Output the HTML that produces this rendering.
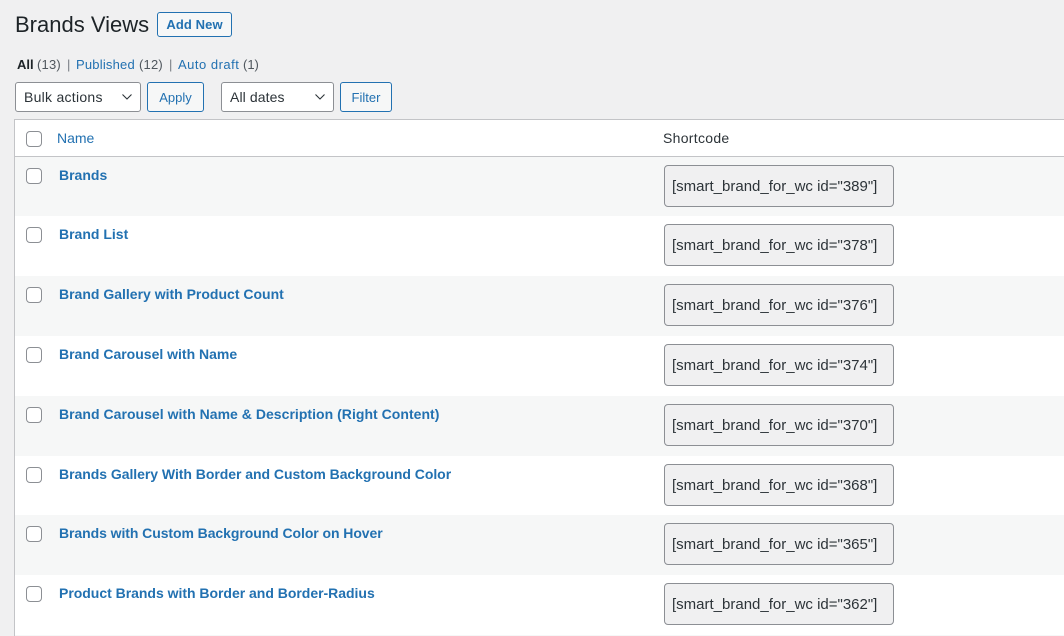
<!DOCTYPE html>
<html lang="en"><head><meta charset="utf-8"><title>Brands Views</title>
<style>
html{margin:0;padding:0;width:1064px;height:636px;overflow:hidden}
body{margin:0;padding:0;width:1064px;height:636px;overflow:hidden;background:#f0f0f1;position:relative;font-family:"Liberation Sans",sans-serif;font-size:13px;color:#50575e}
.a{position:absolute;white-space:nowrap;line-height:18px}
a{color:#2271b1;text-decoration:none}
h1{position:absolute;left:15px;top:11px;margin:0;font-size:22px;line-height:28px;font-weight:400;color:#1d2327;white-space:nowrap}
.btn{position:absolute;box-sizing:border-box;border:1px solid #2271b1;border-radius:3px;background:#f6f7f7;color:#2271b1;text-align:center}
.sel{position:absolute;box-sizing:border-box;border:1px solid #8c8f94;border-radius:3px;background:#fff;color:#2c3338;height:30px;top:82px;line-height:28px;padding-left:8px;font-size:14px}
.sel svg{position:absolute;right:8px;top:11px}
#t{position:absolute;left:14px;top:119px;width:1060px;height:530px;box-sizing:border-box;border:1px solid #c3c4c7;border-right:0;background:#fff}
.r{position:absolute;left:15px;width:1049px}
.alt{background:#f6f7f7}
.cb{position:absolute;left:26px;box-sizing:border-box;width:16px;height:16px;border:1px solid #8c8f94;border-radius:4px;background:#fff}
.n{position:absolute;left:59px;font-weight:700;color:#2271b1;font-size:14px;line-height:18px;white-space:nowrap}
.sc{position:absolute;left:664px;box-sizing:border-box;width:230px;height:42px;border:1px solid #8c8f94;border-radius:4px;background:#f0f0f1;color:#2c3338;font-size:15px;line-height:42px;padding-left:7px;white-space:nowrap}
</style></head><body>
<h1>Brands Views</h1>
<a class="btn" style="left:157px;top:12px;width:75px;height:25px;line-height:23px;font-weight:700;font-size:13px;letter-spacing:.1px">Add New</a>
<b class="a" style="left:17px;top:56px;color:#1d2327">All</b>
<span class="a" style="left:37px;top:56px;letter-spacing:.2px">(13)</span>
<span class="a" style="left:67px;top:56px;color:#787c82">|</span>
<a class="a" style="left:76px;top:56px;letter-spacing:.2px">Published</a>
<span class="a" style="left:139px;top:56px;letter-spacing:.2px">(12)</span>
<span class="a" style="left:169px;top:56px;color:#787c82">|</span>
<a class="a" style="left:178px;top:56px;letter-spacing:.5px">Auto draft</a>
<span class="a" style="left:243px;top:56px">(1)</span>
<div class="sel" style="left:15px;width:126px;letter-spacing:.27px">Bulk actions<svg width="10" height="6" viewBox="0 0 10 6"><path d="M.5 .5l4.5 4.5 4.5-4.5" fill="none" stroke="#2c3338" stroke-width="1.1"/></svg></div>
<a class="btn" style="left:147px;top:82px;width:57px;height:30px;line-height:29px;font-size:13px">Apply</a>
<div class="sel" style="left:221px;width:113px;letter-spacing:.1px">All dates<svg width="10" height="6" viewBox="0 0 10 6"><path d="M.5 .5l4.5 4.5 4.5-4.5" fill="none" stroke="#2c3338" stroke-width="1.1"/></svg></div>
<a class="btn" style="left:340px;top:82px;width:52px;height:30px;line-height:29px;font-size:13px">Filter</a>
<div id="t"></div>
<div class="r" style="top:156px;height:1px;background:#c3c4c7"></div>
<div class="r alt" style="top:157px;height:59px"></div>
<div class="r alt" style="top:276px;height:60px"></div>
<div class="r alt" style="top:396px;height:60px"></div>
<div class="r alt" style="top:515px;height:60px"></div>
<div class="r alt" style="top:635px;height:1px"></div>
<div class="cb" style="top:131px"></div>
<a class="a" style="left:57px;top:129px;font-size:14px">Name</a>
<div class="a" style="left:663px;top:129px;font-size:14px;color:#2c3338;letter-spacing:.3px">Shortcode</div>
<div class="cb" style="top:168px"></div><a class="n" style="top:166px">Brands</a><div class="sc" style="top:165px">[smart_brand_for_wc id="389"]</div>
<div class="cb" style="top:227px"></div><a class="n" style="top:225px">Brand List</a><div class="sc" style="top:224px">[smart_brand_for_wc id="378"]</div>
<div class="cb" style="top:287px"></div><a class="n" style="top:285px">Brand Gallery with Product Count</a><div class="sc" style="top:284px">[smart_brand_for_wc id="376"]</div>
<div class="cb" style="top:347px"></div><a class="n" style="top:345px">Brand Carousel with Name</a><div class="sc" style="top:344px">[smart_brand_for_wc id="374"]</div>
<div class="cb" style="top:407px"></div><a class="n" style="top:405px;letter-spacing:.03px">Brand Carousel with Name &amp; Description (Right Content)</a><div class="sc" style="top:404px">[smart_brand_for_wc id="370"]</div>
<div class="cb" style="top:467px"></div><a class="n" style="top:465px;letter-spacing:-.04px">Brands Gallery With Border and Custom Background Color</a><div class="sc" style="top:464px">[smart_brand_for_wc id="368"]</div>
<div class="cb" style="top:526px"></div><a class="n" style="top:524px;letter-spacing:-.07px">Brands with Custom Background Color on Hover</a><div class="sc" style="top:523px">[smart_brand_for_wc id="365"]</div>
<div class="cb" style="top:586px"></div><a class="n" style="top:584px;letter-spacing:-.02px">Product Brands with Border and Border-Radius</a><div class="sc" style="top:583px">[smart_brand_for_wc id="362"]</div>
</body></html>
